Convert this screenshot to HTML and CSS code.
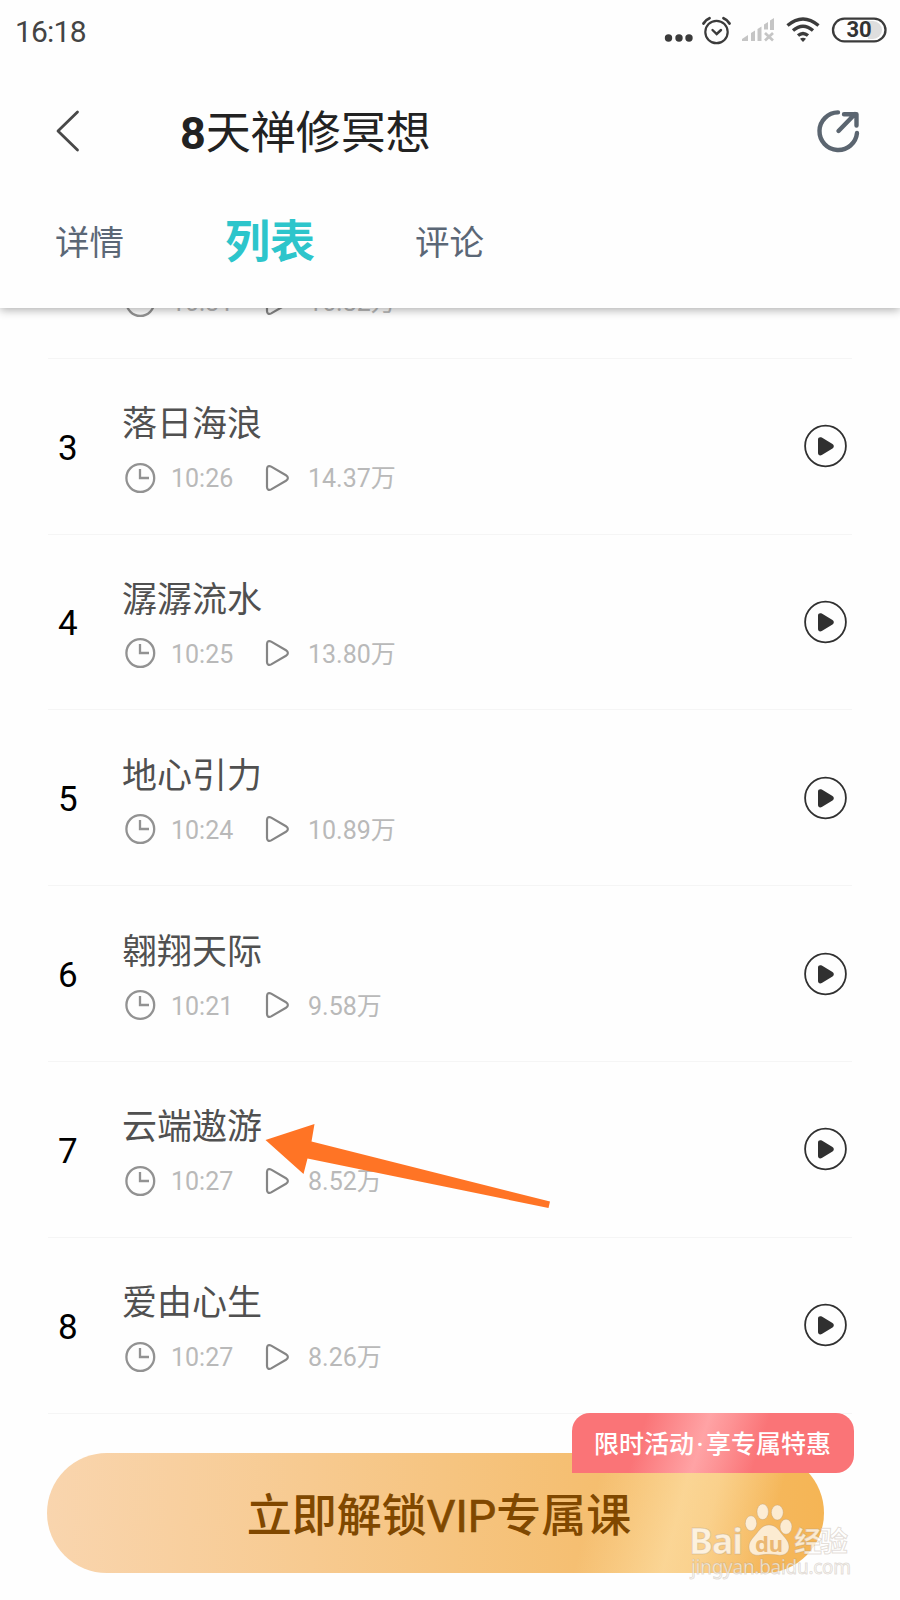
FILE: index.html
```html
<!DOCTYPE html>
<html lang="zh-CN">
<head>
<meta charset="utf-8">
<title>8天禅修冥想</title>
<link rel="stylesheet" href="styles.css">
</head>
<body>
<svg class="defs" width="0" height="0">
  <symbol id="clock" viewBox="0 0 32 32"><circle cx="16.300" cy="16" r="13.900"/><path d="M16 7v9h9"/></symbol>
  <symbol id="tri" viewBox="0 0 26 28"><path d="M3 5v18c0 2.800 2 3.600 4.200 2.400l14.800-8.600c2.500-1.500 2.500-4.100 0-5.600l-14.800-8.600c-2.200-1.200-4.200-.4-4.200 2.400z"/></symbol>
  <symbol id="play" viewBox="0 0 44 44"><circle class="ring" cx="21.500" cy="22" r="20.400"/><path class="solid" d="M14 15.500v13.500c0 2.200 2 3 3.800 2l10.700-6.500c1.800-1.100 1.800-3.400 0-4.500l-10.700-6.400c-1.800-1-3.800-.2-3.800 1.900z"/></symbol>
</svg>
<div class="screen">
  <header class="header">
    <div class="status">
      <span class="time">16:18</span>
      <svg class="status-icons" width="230" height="32" viewBox="0 0 230 32">
        <g fill="#3b3b3b"><circle cx="8.500" cy="22" r="3.700"/><circle cx="19" cy="22" r="3.700"/><circle cx="29" cy="22" r="3.700"/></g>
        <g fill="none" stroke="#3b3b3b" stroke-width="2.200" stroke-linecap="round"><circle cx="56.500" cy="16" r="11.200"/><path d="M52.500 14l4.200 4 4.300-4" stroke-width="2.400"/><path d="M43.500 7.500q2.200-3.700 6-5.200M69.500 7.500q-2.200-3.700-6-5.200" stroke-width="2.800"/></g>
        <g fill="#c5c5c5"><path d="M82 25v-2l6-4v6zM91 17l4-2.500v10.500h-4zM97.500 13l4-2.500v14.500h-4zM104 8.500l4-2.500v7.500h-4zM110 4.500l4-2.500v12h-4z"/></g>
        <path d="M105 17l8 7.500m0-7.500l-8 7.500" stroke="#c5c5c5" stroke-width="2.700"/>
        <g fill="none" stroke="#3b3b3b" stroke-width="3.400"><path d="M127.500 9.500q15.500-13 31 0"/><path d="M133 14.500q10-8.500 20 0"/><path d="M138 19.500q5-4.200 10 0"/></g><path d="M140 22.800q3-2 6 0l-3 3.200z" fill="#3b3b3b"/>
        <path d="M208 5h5a9 9 0 0 1 0 18h-5z" fill="#dedede"/>
        <rect x="173" y="2.600" width="52.500" height="22.800" rx="11.400" fill="none" stroke="#3b3b3b" stroke-width="2.300"/>
        <text x="199" y="21" text-anchor="middle" class="battery">30</text>
      </svg>
    </div>
    <div class="titlebar">
      <svg class="back" width="26" height="44" viewBox="0 0 26 44"><path d="M22.500 3L3 22l19.500 19" fill="none" stroke="#484848" stroke-width="2.800" stroke-linecap="round" stroke-linejoin="round"/></svg>
      <h1 class="title"><b>8</b>天禅修冥想</h1>
      <svg class="share" width="46" height="46" viewBox="0 0 46 46"><g fill="none" stroke="#5b6570" stroke-width="4.400" stroke-linecap="round" stroke-linejoin="round"><path d="M22 4.400A18.800 18.800 0 1 0 41 25"/><path d="M22.500 23L39 6M28 6.300h12.500v11.200"/></g></svg>
    </div>
    <nav class="tabs"><span class="tab">详情</span><span class="tab active">列表</span><span class="tab">评论</span></nav>
  </header>
  <main class="list">
    <div class="row first"><span class="num"></span><div class="info"><div class="name"></div><div class="meta"><svg class="clock"><use href="#clock"/></svg><span class="dur">10:31</span><svg class="tri"><use href="#tri"/></svg><span>16.82万</span></div></div></div>
    <div class="row"><span class="num">3</span><div class="info"><div class="name">落日海浪</div><div class="meta"><svg class="clock"><use href="#clock"/></svg><span class="dur">10:26</span><svg class="tri"><use href="#tri"/></svg><span>14.37万</span></div></div><svg class="play"><use href="#play"/></svg></div>
    <div class="row"><span class="num">4</span><div class="info"><div class="name">潺潺流水</div><div class="meta"><svg class="clock"><use href="#clock"/></svg><span class="dur">10:25</span><svg class="tri"><use href="#tri"/></svg><span>13.80万</span></div></div><svg class="play"><use href="#play"/></svg></div>
    <div class="row"><span class="num">5</span><div class="info"><div class="name">地心引力</div><div class="meta"><svg class="clock"><use href="#clock"/></svg><span class="dur">10:24</span><svg class="tri"><use href="#tri"/></svg><span>10.89万</span></div></div><svg class="play"><use href="#play"/></svg></div>
    <div class="row"><span class="num">6</span><div class="info"><div class="name">翱翔天际</div><div class="meta"><svg class="clock"><use href="#clock"/></svg><span class="dur">10:21</span><svg class="tri"><use href="#tri"/></svg><span>9.58万</span></div></div><svg class="play"><use href="#play"/></svg></div>
    <div class="row"><span class="num">7</span><div class="info"><div class="name">云端遨游</div><div class="meta"><svg class="clock"><use href="#clock"/></svg><span class="dur">10:27</span><svg class="tri"><use href="#tri"/></svg><span>8.52万</span></div></div><svg class="play"><use href="#play"/></svg></div>
    <div class="row"><span class="num">8</span><div class="info"><div class="name">爱由心生</div><div class="meta"><svg class="clock"><use href="#clock"/></svg><span class="dur">10:27</span><svg class="tri"><use href="#tri"/></svg><span>8.26万</span></div></div><svg class="play"><use href="#play"/></svg></div>
  </main>
  <footer class="footer">
    <div class="cta">立即解锁<span class="vip">VIP</span>专属课<span class="badge">限时活动<span class="dot">·</span>享专属特惠</span></div>
  </footer>
  <svg class="arrow" width="290" height="90" viewBox="0 0 290 90"><path d="M2 22L51 6 48 23.500 286.500 83.500 285 90 44 40.500 40 56z" fill="#ff7425" transform="translate(-1.500 -3)"/></svg>
  <svg class="watermark" width="170" height="86" viewBox="0 0 170 86">
    <g class="wm">
      <text x="1" y="54" class="wm-bai" textLength="54">Bai</text>
      <ellipse cx="63" cy="23.300" rx="5.700" ry="7.500"/><ellipse cx="74.700" cy="11.800" rx="5.700" ry="7.800"/><ellipse cx="89.300" cy="12.500" rx="5.900" ry="7.500"/><ellipse cx="98" cy="26.700" rx="5.900" ry="7.500"/>
      <path d="M81 25c-6 0-9 4-12 8-4 5-8 8-8 14 0 7 6 9 11 8 6-1 12-1 18 0 6 1 11-2 11-8s-4-9-8-14c-3-4-6-8-12-8z"/>
      <text x="106" y="52" class="wm-cn" textLength="54">经验</text>
      <text x="3" y="74" class="wm-url" textLength="160">jingyan.baidu.com</text>
    </g>
    <text x="81" y="51.500" text-anchor="middle" class="wm-du">du</text>
  </svg>
</div>
</body>
</html>
```
FILE: styles.css
```css
body { margin: 0; background: #fefefe; font-family: Roboto, "Noto Sans CJK SC", sans-serif; }
.defs { position: absolute; }
.screen { position: relative; width: 900px; height: 1600px; overflow: hidden; display: flex; flex-direction: column; }
.header { position: relative; z-index: 1; flex: none; height: 308px; background: #fefefe; box-shadow: 0 2px 9px rgba(0,0,0,.32); }
.status { height: 62px; padding: 0 0 0 15px; display: flex; align-items: center; box-sizing: border-box; }
.time { font-size: 30px; letter-spacing: -.8px; line-height: 62px; padding-top: 2px; color: #444; width: 645px; }
.status-icons { flex: none; margin-top: 2px; }
.battery { font: 700 22px Roboto, sans-serif; fill: #333; }
.titlebar { height: 138px; box-sizing: border-box; display: flex; align-items: center; padding: 0 38px 0 55px; }
.back { margin-top: -1px; }
.title { margin: 0 0 0 99px; padding-top: 5px; flex: 1; font-size: 45px; font-weight: 400; line-height: 60px; color: #222; }
.tabs { display: flex; align-items: center; height: 84px; padding: 0 0 0 55px; color: #5b6776; }
.tab { font-size: 34.500px; line-height: 60px; width: 170px; padding-top: 1px; }
.tab.active { font-size: 45px; font-weight: 700; color: #2dc5cb; width: 190px; padding-top: 2px; }
.list { flex: none; height: 1105.500px; box-sizing: border-box; overflow: hidden; padding: 0 48px; }
.row { height: 175.800px; box-sizing: border-box; border-bottom: 1px solid #f5f5f5; display: flex; align-items: center; padding: 0 4px 0 10px; }
.row.first { margin-top: -125px; }
.num { width: 64px; font-size: 35px; color: #000; line-height: 44px; padding-top: 5px; }
.info { flex: 1; height: 106px; padding-top: 8px; }
.name { height: 56px; line-height: 55px; font-size: 35px; color: #505050; }
.meta { height: 49px; display: flex; align-items: center; font-size: 25px; line-height: 50px; color: #b9b9b9; }
.meta span { padding-top: 3px; }
.clock { width: 32px; height: 32px; margin: 0 15px 0 2px; fill: none; stroke: #929292; stroke-width: 2.300; }
.dur { width: 93px; }
.tri { width: 26px; height: 28px; margin-right: 18px; fill: none; stroke: #858585; stroke-width: 2.200; }
.play { width: 44px; height: 44px; }
.ring { fill: none; stroke: #303030; stroke-width: 1.800; }
.solid { fill: #303030; }
.footer { padding: 39px 76px 0 47px; }
.cta { position: relative; height: 120px; border-radius: 60px; text-align: center; font-size: 45px; line-height: 128px; font-weight: 500; color: #804800; text-indent: 7px; background: linear-gradient(105deg, transparent 69%, rgba(253,224,168,.7) 80%, rgba(253,224,168,.6) 84%, transparent 92%), linear-gradient(90deg, #f9d5ae, #f5bf72 68%, #f5b555); }
.vip { font-weight: 400; -webkit-text-stroke: .7px #804800; }
.badge { position: absolute; left: 525px; top: -40px; width: 282px; height: 60px; border-radius: 18px 18px 18px 0; background: linear-gradient(108deg, #fa7477 25%, #ffa3a5 46%, #fd9294 54%, #fa7477 66%); color: #fff; font-size: 25px; line-height: 64px; text-indent: -1px; }
.dot { display: inline-block; width: 12px; text-align: center; text-indent: 0; }
.arrow { position: absolute; left: 265px; top: 1121px; }
.watermark { position: absolute; left: 688px; top: 1500px; }
.wm { fill: rgba(255,255,255,.72); stroke: rgba(165,145,125,.3); stroke-width: 1px; }
.wm-bai { font: 700 36px "Noto Sans", sans-serif; }
.wm-cn { font: 700 28px "Noto Sans CJK SC", sans-serif; }
.wm-url { font: 400 19px "Noto Sans", sans-serif; }
.wm-du { font: 700 22px "Noto Sans", sans-serif; fill: #ebb873; }
```
